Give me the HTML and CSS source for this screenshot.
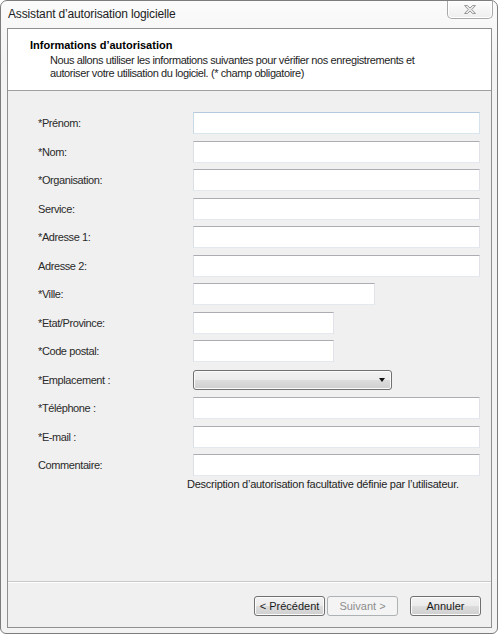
FILE: index.html
```html
<!DOCTYPE html>
<html lang="fr">
<head>
<meta charset="utf-8">
<title>Assistant d’autorisation logicielle</title>
<link rel="stylesheet" href="styles.css">
</head>
<body>
<div class="window">
  <div class="titlebar">
    <span class="title">Assistant d’autorisation logicielle</span>
    <div class="close">
      <svg width="14" height="11" viewBox="0 0 14 11">
        <path d="M1.5 1.5 L4.5 1.5 L7 4 L9.5 1.5 L12.5 1.5 L8.8 5.5 L12.5 9.5 L9.5 9.5 L7 7 L4.5 9.5 L1.5 9.5 L5.2 5.5 Z" fill="#e8e8e8" stroke="#9a9a9a" stroke-width="1" stroke-linejoin="round"/>
      </svg>
    </div>
  </div>
  <div class="client">
    <div class="header">
      <div class="h-title">Informations d’autorisation</div>
      <div class="h-desc">Nous allons utiliser les informations suivantes pour vérifier nos enregistrements et<br>autoriser votre utilisation du logiciel. (* champ obligatoire)</div>
    </div>
    <div class="form">
      <div class="row"><label class="lbl">*Prénom:</label><input class="field focus" type="text"></div>
      <div class="row"><label class="lbl">*Nom:</label><input class="field" type="text"></div>
      <div class="row"><label class="lbl">*Organisation:</label><input class="field" type="text"></div>
      <div class="row"><label class="lbl">Service:</label><input class="field" type="text"></div>
      <div class="row"><label class="lbl">*Adresse 1:</label><input class="field" type="text"></div>
      <div class="row"><label class="lbl">Adresse 2:</label><input class="field" type="text"></div>
      <div class="row"><label class="lbl">*Ville:</label><input class="field w-city" type="text"></div>
      <div class="row"><label class="lbl">*Etat/Province:</label><input class="field w-short" type="text"></div>
      <div class="row"><label class="lbl">*Code postal:</label><input class="field w-short" type="text"></div>
      <div class="row"><label class="lbl">*Emplacement :</label><div class="combo"><span class="arrow"></span></div></div>
      <div class="row"><label class="lbl">*Téléphone :</label><input class="field" type="text"></div>
      <div class="row"><label class="lbl">*E-mail :</label><input class="field" type="text"></div>
      <div class="row"><label class="lbl">Commentaire:</label><input class="field" type="text"></div>
      <div class="hint">Description d’autorisation facultative définie par l’utilisateur.</div>
    </div>
    <div class="footer">
      <button class="btn" type="button">&lt; Précédent</button>
      <button class="btn disabled" type="button">Suivant &gt;</button>
      <button class="btn cancel" type="button">Annuler</button>
    </div>
  </div>
</div>
</body>
</html>
```
FILE: styles.css
```css
html, body {
  margin: 0;
  padding: 0;
  background: #ffffff;
}
body {
  width: 500px;
  height: 634px;
  font-family: "Liberation Sans", Arial, sans-serif;
  font-size: 11px;
  letter-spacing: -0.4px;
  color: #1a1a1a;
}
.window {
  box-sizing: border-box;
  width: 498px;
  height: 634px;
  border: 1px solid #7c7c7c;
  border-radius: 7px 7px 6px 6px;
  background: linear-gradient(#fbfbfb, #f3f3f3 60px, #f3f3f3);
  padding: 0 5px 5px 6px;
  display: flex;
  flex-direction: column;
}
.titlebar {
  height: 27px;
  display: flex;
  justify-content: space-between;
  align-items: flex-start;
}
.title {
  padding-left: 1px;
  line-height: 27px;
  font-size: 12px;
  letter-spacing: -0.15px;
  color: #222;
}
.close {
  box-sizing: border-box;
  width: 46px;
  height: 18px;
  margin-right: -1px;
  border: 1px solid #a9a9a9;
  border-top: none;
  border-radius: 0 0 5px 5px;
  background: linear-gradient(#fdfdfd, #eeeeee);
  box-shadow: inset 0 0 0 1px #ffffff;
  display: flex;
  align-items: center;
  justify-content: center;
}
.client {
  flex: 1;
  border: 1px solid #8e8f8f;
  background: #f0f0f0;
  display: flex;
  flex-direction: column;
}
.header {
  box-sizing: border-box;
  height: 62px;
  background: #ffffff;
  border-bottom: 1px solid #a0a0a0;
  padding: 10px 0 0 22px;
}
.h-title {
  font-weight: bold;
  letter-spacing: 0;
  line-height: 13px;
  color: #000;
}
.h-desc {
  margin-top: 2px;
  padding-left: 20px;
  line-height: 13px;
  color: #1e1e1e;
}
.form {
  flex: 1;
  padding: 21px 0 0 30px;
}
.row {
  display: flex;
  align-items: center;
  height: 22px;
  margin-bottom: 6.5px;
}
.lbl {
  width: 155px;
  flex: none;
  color: #2a2a2a;
}
.field {
  box-sizing: border-box;
  width: 287px;
  height: 22px;
  margin: 0;
  padding: 0 3px;
  border: 1px solid;
  border-color: #abadb3 #e2e3ea #e3e9ef #dbdfe6;
  background: #ffffff;
  font: inherit;
  outline: none;
}
.field.focus {
  border-color: #b4c9db #d4e3ee #d8e6f0 #c8d9e6;
}
.w-city { width: 182px; }
.w-short { width: 141px; }
.combo {
  box-sizing: border-box;
  position: relative;
  width: 199px;
  height: 20px;
  border: 1px solid #707070;
  border-radius: 3px;
  background: linear-gradient(#f2f2f2, #ebebeb 50%, #dddddd 50%, #cfcfcf);
  box-shadow: inset 0 0 0 1px #fbfbfb;
}
.arrow {
  position: absolute;
  right: 6px;
  top: 7px;
  width: 0;
  height: 0;
  border-left: 3.5px solid transparent;
  border-right: 3.5px solid transparent;
  border-top: 4px solid #111;
}
.hint {
  margin-top: -4.5px;
  padding-left: 149px;
  line-height: 13px;
  letter-spacing: -0.25px;
  color: #1e1e1e;
}
.footer {
  box-sizing: border-box;
  height: 46px;
  border-top: 1px solid #c8c8c8;
  box-shadow: inset 0 1px 0 #ffffff;
  padding: 14px 10px 0 0;
  display: flex;
  justify-content: flex-end;
  align-items: flex-start;
}
.btn {
  box-sizing: border-box;
  width: 71px;
  height: 20px;
  margin: 0;
  padding: 0;
  border: 1px solid #707070;
  border-radius: 3px;
  background: linear-gradient(#f2f2f2, #ebebeb 50%, #dddddd 50%, #cfcfcf);
  box-shadow: inset 0 0 0 1px #fcfcfc;
  font: inherit;
  color: #1a1a1a;
}
.btn + .btn {
  margin-left: 2px;
}
.btn.disabled {
  border-color: #adb2b5;
  background: #f4f4f4;
  box-shadow: none;
  color: #8d8d8d;
}
.btn.cancel {
  margin-left: 12px;
}
```
